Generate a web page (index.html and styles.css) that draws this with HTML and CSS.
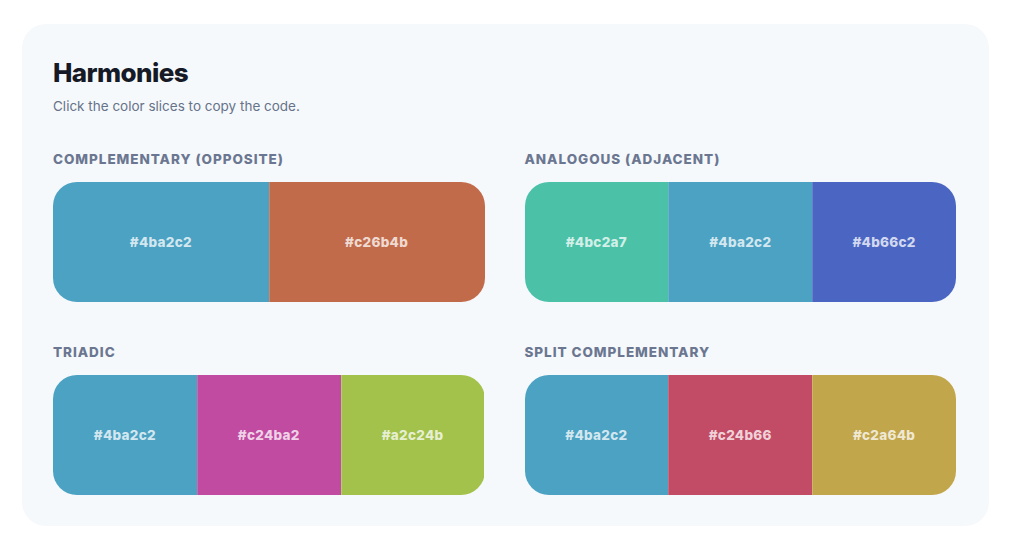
FILE: index.html
```html
<!DOCTYPE html>
<html lang="en">
<head>
<meta charset="utf-8">
<title>Harmonies</title>
<link rel="stylesheet" href="styles.css">
</head>
<body>
<section class="card">
  <h1 class="title">Harmonies</h1>
  <p class="subtitle">Click the color slices to copy the code.</p>
  <div class="grid">
    <div class="group">
      <h2 class="label">Complementary (Opposite)</h2>
      <div class="strip">
        <button class="slice c-4ba2c2">#4ba2c2</button>
        <button class="slice c-c26b4b">#c26b4b</button>
      </div>
    </div>
    <div class="group">
      <h2 class="label">Analogous (Adjacent)</h2>
      <div class="strip">
        <button class="slice c-4bc2a7">#4bc2a7</button>
        <button class="slice c-4ba2c2">#4ba2c2</button>
        <button class="slice c-4b66c2">#4b66c2</button>
      </div>
    </div>
    <div class="group">
      <h2 class="label">Triadic</h2>
      <div class="strip">
        <button class="slice c-4ba2c2">#4ba2c2</button>
        <button class="slice c-c24ba2">#c24ba2</button>
        <button class="slice c-a2c24b">#a2c24b</button>
      </div>
    </div>
    <div class="group">
      <h2 class="label">Split Complementary</h2>
      <div class="strip">
        <button class="slice c-4ba2c2">#4ba2c2</button>
        <button class="slice c-c24b66">#c24b66</button>
        <button class="slice c-c2a64b">#c2a64b</button>
      </div>
    </div>
  </div>
</section>
</body>
</html>
```
FILE: styles.css
```css
* { box-sizing: border-box; }
html, body { background: #ffffff; }
body {
  margin: 0;
  padding: 24px 0 0 22px;
  font-family: Inter, "Noto Sans", sans-serif;
}
.card {
  width: 967px;
  height: 502px;
  background: #f6f9fc;
  border-radius: 24px;
  padding: 33px 33px 32px 31px;
}
.title {
  margin: 0;
  font-size: 26px;
  line-height: 32px;
  font-weight: 800;
  color: #161a26;
  letter-spacing: -0.6px;
}
.subtitle {
  margin: 7px 0 0;
  font-size: 13.5px;
  line-height: 20px;
  color: #667389;
}
.grid {
  margin-top: 35px;
  display: grid;
  grid-template-columns: 1fr 1fr;
  column-gap: 40px;
  row-gap: 42px;
}
.label {
  margin: 0 0 15px;
  font-size: 13.5px;
  line-height: 16px;
  font-weight: 800;
  text-transform: uppercase;
  letter-spacing: 0.95px;
  color: #6b7791;
}
.strip {
  display: flex;
  height: 120px;
  border-radius: 24px;
  overflow: hidden;
}
.slice {
  flex: 1 1 0;
  border: 0;
  margin: 0;
  padding: 0;
  font-family: inherit;
  font-size: 13.5px;
  font-weight: 800;
  letter-spacing: 0.3px;
  color: rgba(255, 255, 255, 0.76);
  cursor: pointer;
}
.slice + .slice { box-shadow: inset 1px 0 0 rgba(255, 255, 255, 0.18); }
.c-4ba2c2 { background: #4ba2c2; }
.c-c26b4b { background: #c26b4b; }
.c-4bc2a7 { background: #4bc2a7; }
.c-4b66c2 { background: #4b66c2; }
.c-c24ba2 { background: #c24ba2; }
.c-a2c24b { background: #a2c24b; }
.c-c24b66 { background: #c24b66; }
.c-c2a64b { background: #c2a64b; }
```
